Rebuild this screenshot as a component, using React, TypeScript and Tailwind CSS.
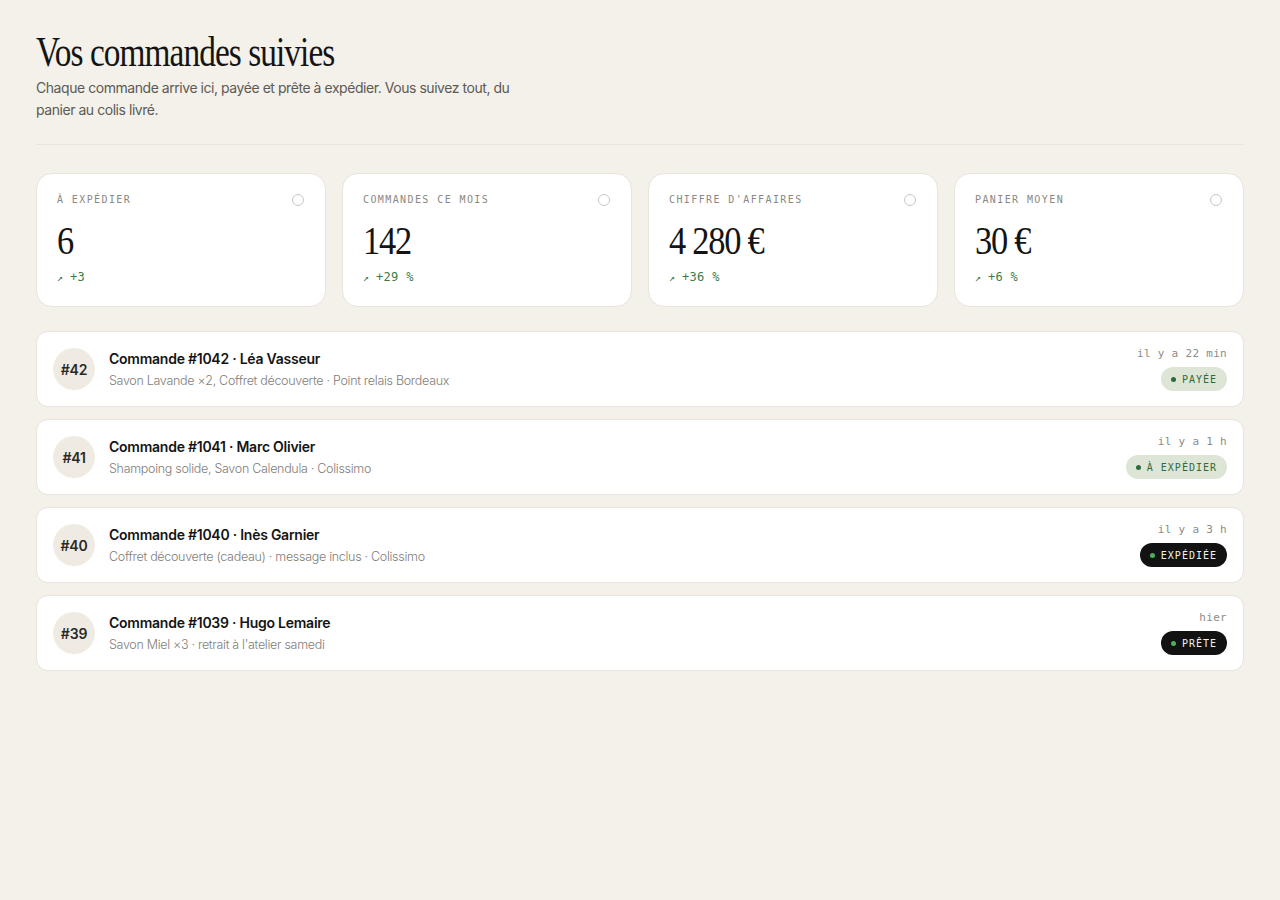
import React from "react";

const stats = [
  { label: "À expédier", value: "6", delta: "+3" },
  { label: "Commandes ce mois", value: "142", delta: "+29 %" },
  { label: "Chiffre d'affaires", value: "4 280 €", delta: "+36 %" },
  { label: "Panier moyen", value: "30 €", delta: "+6 %" },
];

type Status = "light" | "dark";

const orders: {
  short: string;
  title: string;
  detail: string;
  time: string;
  status: string;
  tone: Status;
}[] = [
  {
    short: "#42",
    title: "Commande #1042 · Léa Vasseur",
    detail: "Savon Lavande ×2, Coffret découverte · Point relais Bordeaux",
    time: "il y a 22 min",
    status: "Payée",
    tone: "light",
  },
  {
    short: "#41",
    title: "Commande #1041 · Marc Olivier",
    detail: "Shampoing solide, Savon Calendula · Colissimo",
    time: "il y a 1 h",
    status: "À expédier",
    tone: "light",
  },
  {
    short: "#40",
    title: "Commande #1040 · Inès Garnier",
    detail: "Coffret découverte (cadeau) · message inclus · Colissimo",
    time: "il y a 3 h",
    status: "Expédiée",
    tone: "dark",
  },
  {
    short: "#39",
    title: "Commande #1039 · Hugo Lemaire",
    detail: "Savon Miel ×3 · retrait à l'atelier samedi",
    time: "hier",
    status: "Prête",
    tone: "dark",
  },
];

const serif = "font-['Liberation_Serif',serif]";
const mono = "font-['DejaVu_Sans_Mono',monospace]";

export default function App() {
  return (
    <div className="min-h-screen bg-[#f4f1ea] px-9 pt-[29px] pb-10 font-['Inter',sans-serif] text-[#161616]">
      {/* Header */}
      <header className="pb-[23px] border-b border-[#e9e5dc]">
        <h1
          className={`${serif} inline-block origin-left scale-x-[0.775] whitespace-nowrap text-[43px] leading-[46px] tracking-[-1.2px] text-[#141414]`}
        >
          Vos commandes suivies
        </h1>
        <p className="mt-[2px] max-w-[490px] text-[14px] leading-[22px] tracking-[-0.45px] text-[#5c5a55]">
          Chaque commande arrive ici, payée et prête à expédier. Vous suivez tout, du
          panier au colis livré.
        </p>
      </header>

      {/* Stats */}
      <div className="mt-7 grid grid-cols-4 gap-4">
        {stats.map((s) => (
          <div
            key={s.label}
            className="h-[134px] rounded-2xl border border-[#e8e4db] bg-white px-5 pt-[18px]"
          >
            <div className="flex items-center justify-between">
              <span className={`${mono} text-[10px] uppercase tracking-[1.4px] text-[#8a8883]`}>
                {s.label}
              </span>
              <span className="mr-[1px] h-[12px] w-[12px] rounded-full border border-[#c9c7c2]" />
            </div>
            <div
              className={`${serif} mt-[11px] inline-block origin-left scale-x-[0.84] whitespace-nowrap text-[41px] leading-[44px] tracking-[-1.5px] text-[#141414]`}
            >
              {s.value}
            </div>
            <div className={`${mono} mt-[6px] flex items-center gap-[7px] text-[12px] text-[#3d7a47]`}>
              <span className="text-[10px]">↗</span>
              <span className="tracking-[0.3px]">{s.delta}</span>
            </div>
          </div>
        ))}
      </div>

      {/* Orders */}
      <div className="mt-[24px] flex flex-col gap-3">
        {orders.map((o) => (
          <div
            key={o.short}
            className="flex h-[76px] items-center justify-between rounded-xl border border-[#e8e4db] bg-white px-4"
          >
            <div className="flex items-center gap-[14px]">
              <div className="flex h-[42px] w-[42px] items-center justify-center rounded-full bg-[#efebe3] text-[14px] font-semibold tracking-[-0.2px] text-[#2a2926]">
                {o.short}
              </div>
              <div>
                <div className="text-[14px] font-semibold leading-[20px] tracking-[-0.25px] text-[#141414]">
                  {o.title}
                </div>
                <div className="mt-[3px] text-[12.5px] font-light leading-[18px] tracking-[-0.3px] text-[#7f7d78]">
                  {o.detail}
                </div>
              </div>
            </div>
            <div className="flex flex-col items-end gap-[6px]">
              <span className={`${mono} text-[11px] leading-[14px] tracking-[0.3px] text-[#8d8b86]`}>
                {o.time}
              </span>
              <span
                className={`${mono} flex h-[24px] items-center gap-[6px] rounded-full px-[10px] text-[10px] uppercase tracking-[1px] ${
                  o.tone === "light"
                    ? "bg-[#dde5d6] text-[#2f6b3a]"
                    : "bg-[#121212] text-[#f2f0ea]"
                }`}
              >
                <span
                  className={`h-[5px] w-[5px] rounded-full ${
                    o.tone === "light" ? "bg-[#2f6b3a]" : "bg-[#4caf5c]"
                  }`}
                />
                {o.status}
              </span>
            </div>
          </div>
        ))}
      </div>
    </div>
  );
}
